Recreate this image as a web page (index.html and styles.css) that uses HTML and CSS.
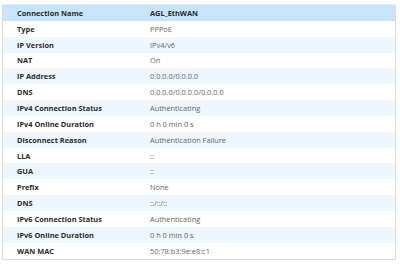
FILE: index.html
```html
<!DOCTYPE html>
<html>
<head>
<meta charset="utf-8">
<link rel="stylesheet" href="styles.css">
</head>
<body>
<div class="card">
  <div class="row head"><span class="k">Connection Name</span><span class="v">AGL_EthWAN</span></div>
  <div class="row"><span class="k">Type</span><span class="v">PPPoE</span></div>
  <div class="row alt"><span class="k">IP Version</span><span class="v">IPv4/v6</span></div>
  <div class="row"><span class="k">NAT</span><span class="v">On</span></div>
  <div class="row alt"><span class="k">IP Address</span><span class="v">0.0.0.0/0.0.0.0</span></div>
  <div class="row"><span class="k">DNS</span><span class="v">0.0.0.0/0.0.0.0/0.0.0.0</span></div>
  <div class="row alt"><span class="k">IPv4 Connection Status</span><span class="v">Authenticating</span></div>
  <div class="row"><span class="k">IPv4 Online Duration</span><span class="v">0 h 0 min 0 s</span></div>
  <div class="row alt"><span class="k">Disconnect Reason</span><span class="v">Authentication Failure</span></div>
  <div class="row"><span class="k">LLA</span><span class="v">::</span></div>
  <div class="row alt"><span class="k">GUA</span><span class="v">::</span></div>
  <div class="row"><span class="k">Prefix</span><span class="v">None</span></div>
  <div class="row alt"><span class="k">DNS</span><span class="v">::/::/::</span></div>
  <div class="row"><span class="k">IPv6 Connection Status</span><span class="v">Authenticating</span></div>
  <div class="row alt"><span class="k">IPv6 Online Duration</span><span class="v">0 h 0 min 0 s</span></div>
  <div class="row"><span class="k">WAN MAC</span><span class="v">50:78:b3:9e:e8:c1</span></div>
</div>
</body>
</html>
```
FILE: styles.css
```css
html, body {
  margin: 0;
  padding: 0;
  background: #ffffff;
}
body {
  font-family: "Open Sans", "Noto Sans", sans-serif;
  font-size: 7.4px;
}
.card {
  margin: 4px 0 0 2px;
  width: 392px;
  border: 1px solid #dedede;
  border-top-color: #ececec;
}
.row {
  display: flex;
  align-items: center;
  height: 15.85px;
  background: #ffffff;
}
.row.alt {
  background: #eef6fe;
}
.row.head {
  background: #c6e5fc;
}
.k {
  width: 133px;
  padding-left: 14px;
  font-weight: 700;
  color: #2b2b2b;
}
.v {
  color: #666666;
}
.head .v {
  font-weight: 700;
  color: #2b2b2b;
}
```
